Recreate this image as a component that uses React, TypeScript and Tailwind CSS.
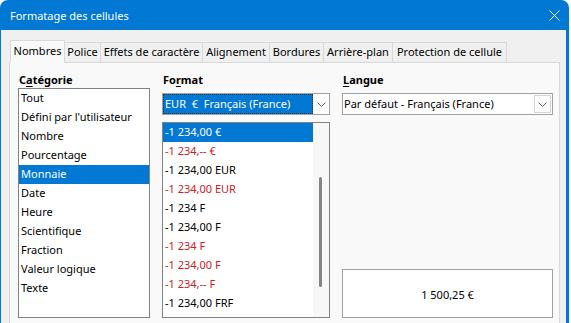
import React from "react";

const Chevron = () => (
  <svg width="9" height="5" viewBox="0 0 9 5" className="block">
    <path d="M0.5 0.5 L4.5 4.5 L8.5 0.5" fill="none" stroke="#5f5f5f" strokeWidth="1" />
  </svg>
);

const tabs: [string, number][] = [
  ["Nombres", 55],
  ["Police", 36],
  ["Effets de caractère", 102],
  ["Alignement", 67],
  ["Bordures", 54],
  ["Arrière-plan", 69],
  ["Protection de cellule", 114],
];

const cats = [
  "Tout",
  "Défini par l'utilisateur",
  "Nombre",
  "Pourcentage",
  "Monnaie",
  "Date",
  "Heure",
  "Scientifique",
  "Fraction",
  "Valeur logique",
  "Texte",
];

const fmts: [string, "sel" | "red" | "blk"][] = [
  ["-1 234,00 €", "sel"],
  ["-1 234,-- €", "red"],
  ["-1 234,00 EUR", "blk"],
  ["-1 234,00 EUR", "red"],
  ["-1 234 F", "blk"],
  ["-1 234,00 F", "blk"],
  ["-1 234 F", "red"],
  ["-1 234,00 F", "red"],
  ["-1 234,-- F", "red"],
  ["-1 234,00 FRF", "blk"],
];

export default function App() {
  return (
    <div className="w-[571px] h-[323px] overflow-hidden bg-white font-['Noto_Sans',sans-serif] text-[11px] text-black">
      <div className="w-[569px] h-[345px] flex flex-col rounded-t-[8px] overflow-hidden bg-[#0078d4]">
        {/* Title bar */}
        <div className="h-[30px] shrink-0 flex items-center justify-between pl-[10px] pr-[9px] text-white text-[11px]">
          <span className="leading-none">Formatage des cellules</span>
          <svg width="11" height="11" viewBox="0 0 11 11" className="block">
            <path d="M0.5 0.5 L10.5 10.5 M10.5 0.5 L0.5 10.5" stroke="#ffffff" strokeWidth="1" />
          </svg>
        </div>
        {/* Body */}
        <div className="flex-1 ml-[1px] mr-[3px] bg-[#f0f0f0] pl-[8px] pr-[6px] pt-[10px] flex flex-col">
          {/* Tabs */}
          <div className="flex items-end h-[23px] -mb-px relative z-10">
            {tabs.map(([t, w], i) =>
              i === 0 ? (
                <div
                  key={t}
                  style={{ width: w }}
                  className="h-[23px] ml-[1px] border border-b-0 border-[#d9d9d9] bg-[#f9f9f9] flex items-center justify-center pb-[1px]"
                >
                  {t}
                </div>
              ) : (
                <div
                  key={t}
                  style={{ width: w }}
                  className="h-[21px] border border-l-0 border-[#d9d9d9] bg-[#f0f0f0] flex items-center justify-center pb-[1px]"
                >
                  {t}
                </div>
              )
            )}
          </div>
          {/* Panel */}
          <div className="flex-1 border border-[#d9d9d9] bg-[#f9f9f9] pl-[8px] pr-[5px] pt-[9px] flex gap-[12px]">
            {/* Catégorie */}
            <div className="w-[132px] flex flex-col">
              <div className="h-[16px] leading-[16px] font-bold pl-[1px]">
                C<span className="underline underline-offset-2">a</span>tégorie
              </div>
              <div className="h-[230px] border border-[#828282] bg-white flex flex-col">
                {cats.map((c) => (
                  <div
                    key={c}
                    className={
                      "h-[19px] leading-[18px] pl-[2px] shrink-0 " +
                      (c === "Monnaie" ? "bg-[#0078d4] text-white" : "")
                    }
                  >
                    {c}
                  </div>
                ))}
              </div>
            </div>
            {/* Format */}
            <div className="w-[168px] flex flex-col">
              <div className="h-[16px] leading-[16px] font-bold pl-[1px]">
                Fo<span className="underline underline-offset-2">r</span>mat
              </div>
              <div className="mt-[5px] h-[22px] border border-[#a0a0a0] bg-white flex">
                <div className="flex-1 bg-[#0078d4] text-white border border-dotted border-[#333] flex items-center pl-[1px] whitespace-pre">
                  EUR  €  Français (France)
                </div>
                <div className="w-[16px] flex items-center justify-center">
                  <Chevron />
                </div>
              </div>
              <div className="mt-[7px] h-[196px] border border-[#828282] bg-white flex">
                <div className="flex-1 flex flex-col">
                  {fmts.map(([f, k], i) => (
                    <div
                      key={i}
                      className={
                        "h-[19px] leading-[18px] pl-[2px] shrink-0 " +
                        (k === "sel"
                          ? "bg-[#0078d4] text-white"
                          : k === "red"
                          ? "text-[#c9211e]"
                          : "")
                      }
                    >
                      {f}
                    </div>
                  ))}
                </div>
                <div className="w-[16px] bg-[#f7f7f7] pt-[54px] pl-[6px]">
                  <div className="w-[3px] h-[110px] rounded-full bg-[#858585]" />
                </div>
              </div>
            </div>
            {/* Langue */}
            <div className="w-[211px] flex flex-col">
              <div className="h-[16px] leading-[16px] font-bold pl-[1px]">
                <span className="underline underline-offset-2">L</span>angue
              </div>
              <div className="mt-[5px] h-[22px] border border-[#a0a0a0] bg-white flex items-stretch">
                <div className="flex-1 flex items-center pl-[1px]">Par défaut - Français (France)</div>
                <div className="w-[17px] my-[1px] mr-[1px] border border-[#d4d4d4] flex items-center justify-center">
                  <Chevron />
                </div>
              </div>
              <div className="mt-[154px] h-[49px] border border-[#a0a0a0] bg-white flex items-center justify-center pt-[3px]">
                1 500,25 €
              </div>
            </div>
          </div>
        </div>
      </div>
    </div>
  );
}
